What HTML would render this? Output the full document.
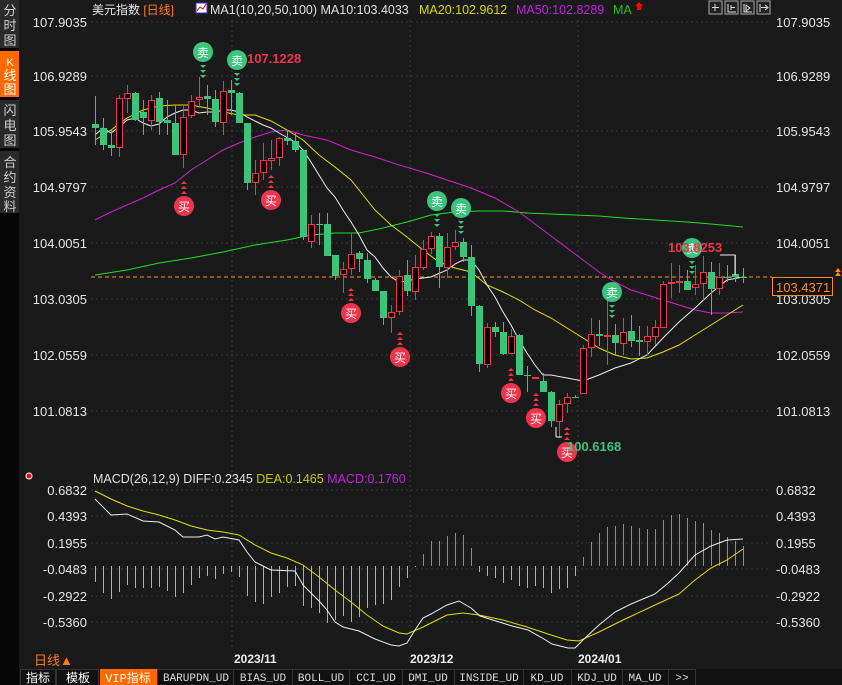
<!DOCTYPE html>
<html><head><meta charset="utf-8"><style>
body{margin:0;width:842px;height:685px;background:#1a1a1a;overflow:hidden;font-family:"Liberation Sans","Noto Sans CJK SC",sans-serif;}
svg{position:absolute;left:0;top:0}
</style></head><body>
<svg id="s" width="842" height="685" xmlns="http://www.w3.org/2000/svg" font-family="Liberation Sans, Noto Sans CJK SC, sans-serif">
<rect x="0" y="0" width="842" height="685" fill="#1a1a1a"/>
<rect x="0" y="0" width="19" height="685" fill="#060606"/>
<rect x="0" y="0" width="19" height="48" fill="#2a2a2a"/>
<rect x="0" y="51" width="19" height="46" fill="#ff6a00"/>
<rect x="0" y="100" width="19" height="48" fill="#2a2a2a"/>
<rect x="0" y="151" width="19" height="62" fill="#2a2a2a"/>
<g fill="#cfcfcf" font-size="13" text-anchor="middle">
<text x="10" y="15">分</text><text x="10" y="30">时</text><text x="10" y="45">图</text>
<text x="10" y="66" fill="#fff" font-size="11">K</text><text x="10" y="80" fill="#fff">线</text><text x="10" y="94" fill="#fff">图</text>
<text x="10" y="115">闪</text><text x="10" y="130">电</text><text x="10" y="145">图</text>
<text x="10" y="167">合</text><text x="10" y="182">约</text><text x="10" y="197">资</text><text x="10" y="211">料</text>
</g>
<g stroke="#3a3a3a" stroke-dasharray="2,3" stroke-width="1" shape-rendering="crispEdges">
<line x1="91" y1="22" x2="770" y2="22"/><line x1="91" y1="76" x2="770" y2="76"/><line x1="91" y1="131" x2="770" y2="131"/><line x1="91" y1="187" x2="770" y2="187"/><line x1="91" y1="243" x2="770" y2="243"/><line x1="91" y1="299" x2="770" y2="299"/><line x1="91" y1="355" x2="770" y2="355"/><line x1="91" y1="411" x2="770" y2="411"/>
<line x1="91" y1="490" x2="770" y2="490"/><line x1="91" y1="516" x2="770" y2="516"/><line x1="91" y1="543" x2="770" y2="543"/><line x1="91" y1="569" x2="770" y2="569"/><line x1="91" y1="596" x2="770" y2="596"/><line x1="91" y1="622" x2="770" y2="622"/>
<line x1="232" y1="20" x2="232" y2="650"/><line x1="410" y1="20" x2="410" y2="650"/><line x1="578" y1="20" x2="578" y2="650"/>
</g>
<text x="92" y="14" font-size="12" fill="#e8e8e8">美元指数 <tspan fill="#ff7a1a">[日线]</tspan></text>
<rect x="196" y="3" width="11" height="10" fill="#fff" stroke="#33c"/><path d="M197 11 L200 7 L203 9 L206 4" stroke="#d00" fill="none"/>
<text x="210" y="14" font-size="12.5" fill="#e0e0e0">MA1(10,20,50,100) MA10:103.4033</text>
<text x="419" y="14" font-size="12.5" fill="#d8d800">MA20:102.9612</text>
<text x="516" y="14" font-size="12.5" fill="#c020e0">MA50:102.8289</text>
<text x="613" y="14" font-size="12.5" fill="#20c020">MA</text>
<path d="M639 2 L643 6 L641 6 L641 10 L637 10 L637 6 L635 6Z" fill="#f00"/>
<g fill="#222" stroke="#aaa"><rect x="709" y="1" width="13" height="13"/><rect x="725" y="1" width="13" height="13"/><rect x="741" y="1" width="13" height="13"/><rect x="757" y="1" width="13" height="13"/></g>
<g stroke="#ddd" fill="none"><path d="M715 4v7M712 7.5h7"/><path d="M728 4v8h8M731 5v5M731 7.5h4"/><path d="M744 4v8h8M746 5l4 3-4 3z"/><path d="M760 4v8M761 7.5h6M765 5l3 2.5-3 2.5"/></g>
<g font-size="13" fill="#e6e6e6" text-anchor="end">
<text x="87" y="27">107.9035</text><text x="87" y="81">106.9289</text><text x="87" y="136">105.9543</text><text x="87" y="192">104.9797</text><text x="87" y="248">104.0051</text><text x="87" y="304">103.0305</text><text x="87" y="360">102.0559</text><text x="87" y="416">101.0813</text>
<text x="87" y="495">0.6832</text><text x="87" y="521">0.4393</text><text x="87" y="548">0.1955</text><text x="87" y="574">-0.0483</text><text x="87" y="601">-0.2922</text><text x="87" y="627">-0.5360</text>
</g>
<g font-size="13" fill="#e6e6e6">
<text x="776" y="27">107.9035</text><text x="776" y="81">106.9289</text><text x="776" y="136">105.9543</text><text x="776" y="192">104.9797</text><text x="776" y="248">104.0051</text><text x="776" y="304">103.0305</text><text x="776" y="360">102.0559</text><text x="776" y="416">101.0813</text>
<text x="776" y="495">0.6832</text><text x="776" y="521">0.4393</text><text x="776" y="548">0.1955</text><text x="776" y="574">-0.0483</text><text x="776" y="601">-0.2922</text><text x="776" y="627">-0.5360</text>
</g>
<line x1="91" y1="277" x2="772" y2="277" stroke="#ff8c1a" stroke-dasharray="4,3"/>
<rect x="772.5" y="277.5" width="60" height="18" fill="#111" stroke="#ff8c1a"/>
<text x="776" y="292" font-size="13" fill="#ff8c1a">103.4371</text>
<path d="M835 276l3-4 3 4z M835 272l3-4 3 4z" fill="#ff8c1a"/>
<g id="lines" fill="none" stroke-width="1"></g>
<g id="candles" shape-rendering="crispEdges"></g>
<g id="macd"></g>
<g id="marks"></g>
<text x="247" y="63" font-size="13" font-weight="bold" fill="#f0344c">107.1228</text>
<text x="668" y="252" font-size="13" font-weight="bold" fill="#f0344c">103.8253</text>
<text x="567" y="451" font-size="13" font-weight="bold" fill="#3cc47c">100.6168</text>
<path d="M720 255h15v20M556 437h6M556 437v-10" stroke="#eee" fill="none"/>
<circle cx="29" cy="476" r="3" fill="#f00" stroke="#fff" stroke-width="1"/>
<text x="93" y="483" font-size="12.5" fill="#e0e0e0">MACD(26,12,9) DIFF:0.2345 <tspan fill="#c8c800">DEA:0.1465</tspan> <tspan fill="#c020e0">MACD:0.1760</tspan></text>
<g font-size="12" font-weight="bold" fill="#eee"><text x="234" y="663">2023/11</text><text x="410" y="663">2023/12</text><text x="578" y="663">2024/01</text></g>
<text x="34" y="665" font-size="13" fill="#ff7a1a">日线▲</text>
<rect x="19" y="669" width="823" height="16" fill="#111"/>
<g font-size="11" fill="#ddd" font-family="Liberation Mono, Noto Sans CJK SC, monospace" text-anchor="middle">
<rect x="100" y="669" width="57" height="16" fill="#ff6a00"/>
<g stroke="#333" fill="none"><rect x="20.5" y="669.5" width="35" height="16"/><rect x="56.5" y="669.5" width="42" height="16"/><rect x="157.5" y="669.5" width="76" height="16"/><rect x="233.5" y="669.5" width="59" height="16"/><rect x="292.5" y="669.5" width="57" height="16"/><rect x="349.5" y="669.5" width="53" height="16"/><rect x="402.5" y="669.5" width="52" height="16"/><rect x="454.5" y="669.5" width="69" height="16"/><rect x="523.5" y="669.5" width="48" height="16"/><rect x="571.5" y="669.5" width="51" height="16"/><rect x="622.5" y="669.5" width="46" height="16"/><rect x="668.5" y="669.5" width="27" height="16"/></g>
<text x="38" y="682" font-size="12" fill="#fff">指标</text><text x="78" y="682" font-size="12" fill="#fff">模板</text><text x="128" y="682" font-size="12" fill="#fff">VIP指标</text>
<text x="196" y="681">BARUPDN_UD</text><text x="263" y="681">BIAS_UD</text><text x="321" y="681">BOLL_UD</text><text x="376" y="681">CCI_UD</text><text x="428" y="681">DMI_UD</text><text x="489" y="681">INSIDE_UD</text><text x="547" y="681">KD_UD</text><text x="597" y="681">KDJ_UD</text><text x="645" y="681">MA_UD</text><text x="682" y="681">&gt;&gt;</text>
</g>
</svg>
<script>
var NS="http://www.w3.org/2000/svg";
function el(p,t,a){var e=document.createElementNS(NS,t);for(var k in a)e.setAttribute(k,a[k]);p.appendChild(e);return e;}
var C=[["g",124,128,96,145],["g",128,145,118,150],["g",145,148,130,156],["r",98,147,95,157],["r",93,98,85,113],["g",93,120,92,121],["g",112,118,100,135],["r",100,120,95,130],["g",98,122,92,135],["g",120,123,100,135],["g",123,155,105,155],["r",117,154,105,168],["r",101,115,95,118],["r",97,99,77,108],["g",96,99,85,115],["g",99,122,90,127],["r",91,122,81,135],["g",90,93,80,115],["g",93,123,92,122],["g",123,183,123,190],["r",173,182,160,195],["r",160,172,143,180],["r",158,160,140,170],["r",138,157,137,166],["g",138,141,130,145],["g",141,150,133,152],["g",150,237,150,240],["r",224,241,215,248],["g",224,225,213,245],["g",224,256,213,256],["g",255,276,255,280],["r",269,274,262,293],["r",254,268,233,275],["g",253,259,251,272],["g",260,279,253,283],["g",280,291,278,291],["g",291,318,302,325],["r",312,317,305,333],["r",276,311,270,315],["g",275,291,260,296],["r",267,291,255,300],["r",249,267,240,270],["r",236,248,232,254],["g",236,267,233,288],["r",247,267,233,278],["r",242,246,230,250],["g",242,257,238,262],["g",257,306,245,316],["g",306,364,305,372],["r",327,364,323,368],["g",327,332,322,337],["g",332,354,322,355],["r",336,353,329,354],["g",335,375,334,375],["g",375,376,366,392],["r",377,378,377,378],["g",381,392,373,392],["g",392,421,391,427],["r",404,421,400,438],["r",397,403,393,413],["g",397,398,395,398],["r",348,393,345,393],["r",334,347,318,357],["g",334,336,320,346],["r",335,336,290,365],["g",335,343,324,355],["r",332,343,318,355],["g",331,341,315,347],["g",340,342,326,356],["r",336,341,326,355],["r",327,336,320,345],["r",284,327,281,327],["r",282,283,263,298],["r",281,282,265,293],["g",281,290,270,290],["r",284,287,265,295],["r",272,283,256,300],["g",272,289,262,315],["r",277,288,263,295],["g",277,278,265,282],["g",274,277,255,282],["g",277,278,268,283]];
var cg=document.getElementById("candles");
C.forEach(function(c,i){var x=95+8*i;var col=c[0]=="g"?"#3cc47c":"#f0344c";
el(cg,"line",{x1:x+0.5,y1:c[3],x2:x+0.5,y2:c[4],stroke:col});
var h=Math.max(1,c[2]-c[1]);
if(c[0]=="g")el(cg,"rect",{x:x-3,y:c[1],width:7,height:h,fill:col});
else el(cg,"rect",{x:x-2.5,y:c[1]+0.5,width:6,height:h,fill:"#000",stroke:col});});
function pl(g,pts,col){el(g,"polyline",{points:pts,stroke:col,fill:"none"});}
var lg=document.getElementById("lines");
pl(lg,"95,275 127,270 159,263 191,258 223,252 255,245 287,240 311,235 335,233 359,233 383,228 407,222 431,215 455,212 479,211 503,211 527,213 551,214 575,215 599,216 623,218 655,220 687,222 711,224 743,227","#22dd22");
pl(lg,"95,220 111,212 127,205 143,198 159,190 175,183 191,170 207,160 223,150 239,143 255,137 271,132 287,130 303,135 327,140 351,150 375,157 399,165 423,172 447,180 471,188 495,198 519,212 543,230 567,248 583,260 599,272 615,282 631,290 647,295 663,300 679,305 695,310 711,313 727,313 743,312","#d020d0");
pl(lg,"95,140 111,130 127,118 143,110 159,106 175,105 191,105 207,108 223,112 239,115 255,115 271,121 287,130 303,140 319,155 335,167 351,180 367,200 375,210 391,225 407,237 423,250 439,262 455,268 471,272 487,285 503,292 519,300 535,310 551,318 567,328 583,338 599,348 615,355 631,359 647,358 663,352 679,345 695,335 711,325 727,315 743,305","#e0e000");
pl(lg,"95,135 103,128 111,133 119,127 127,120 135,118 143,123 151,126 159,124 167,117 175,113 183,110 191,110 199,113 207,112 215,112 223,110 231,110 239,112 247,117 255,121 263,125 271,128 279,133 295,142 303,150 311,162 319,175 327,188 335,197 343,210 351,222 359,235 367,250 375,257 383,268 391,277 399,282 407,281 415,279 431,277 447,270 455,264 463,260 471,260 479,270 487,285 495,297 503,312 511,325 519,340 527,353 535,365 543,375 551,375 567,378 583,381 599,375 615,368 631,363 647,355 663,338 679,322 695,308 711,293 727,280 743,277","#eeeeee");
var B=[582,593,599,592,585,588,588,588,587,591,597,593,585,578,576,579,574,572,577,596,602,604,597,593,587,586,606,608,613,623,620,616,622,617,608,605,604,600,587,578,567,554,541,541,536,533,535,548,572,576,578,583,580,586,588,586,588,593,589,588,576,557,542,533,527,526,524,526,528,529,529,520,515,514,518,521,523,530,533,537,541,546];
var mg=document.getElementById("macd");
B.forEach(function(b,i){var x=95+8*i;var z=566;el(mg,"line",{x1:x+0.5,y1:z,x2:x+0.5,y2:b,stroke:b>z?"#6ad6a0":"#f0607a","shape-rendering":"crispEdges"});});
pl(mg,"95,491 111,499 127,506 143,511 159,515 175,520 191,526 207,530 223,532 239,535 255,545 271,553 287,558 303,565 319,577 335,590 351,602 367,615 383,626 399,633 407,634 423,627 447,615 463,613 479,615 503,620 527,627 551,635 567,640 579,641 599,632 623,620 655,605 679,594 695,580 711,568 727,560 743,549","#e0e000");
pl(mg,"95,499 111,515 127,514 143,521 159,522 175,530 183,537 199,537 207,535 215,539 223,537 239,540 247,552 255,562 263,566 271,570 295,571 303,585 311,593 319,601 327,610 335,622 343,627 359,631 375,639 391,645 399,646 407,643 415,630 423,618 431,614 447,605 459,601 471,608 480,616 496,621 512,626 528,630 544,639 552,644 568,648 575,648 583,640 599,625 615,612 631,604 655,594 667,584 679,573 695,555 711,546 727,540 743,539","#eeeeee");
var mk=document.getElementById("marks");
function sell(x,y){el(mk,"circle",{cx:x,cy:y,r:10,fill:"#3cc47c"});var t=el(mk,"text",{x:x,y:y+5,"font-size":"12",fill:"#fff","text-anchor":"middle"});t.textContent="卖";
for(var k=0;k<3;k++)el(mk,"path",{d:"M"+(x-3)+" "+(y+13+k*5)+"h6l-3 3z",fill:"#3cc47c"});}
function buy(x,y){el(mk,"circle",{cx:x,cy:y,r:10,fill:"#f0344c"});var t=el(mk,"text",{x:x,y:y+5,"font-size":"12",fill:"#fff","text-anchor":"middle"});t.textContent="买";
for(var k=0;k<3;k++)el(mk,"path",{d:"M"+(x-3)+" "+(y-12-k*5)+"h6l-3 -3z",fill:"#f0344c"});}
sell(203,52);sell(237,60);sell(437,201);sell(461,208);sell(612,292);sell(692,248);
buy(184,206);buy(271,200);buy(351,313);buy(400,357);buy(511,393);buy(536,418);buy(567,452);
</script>
</body></html>
